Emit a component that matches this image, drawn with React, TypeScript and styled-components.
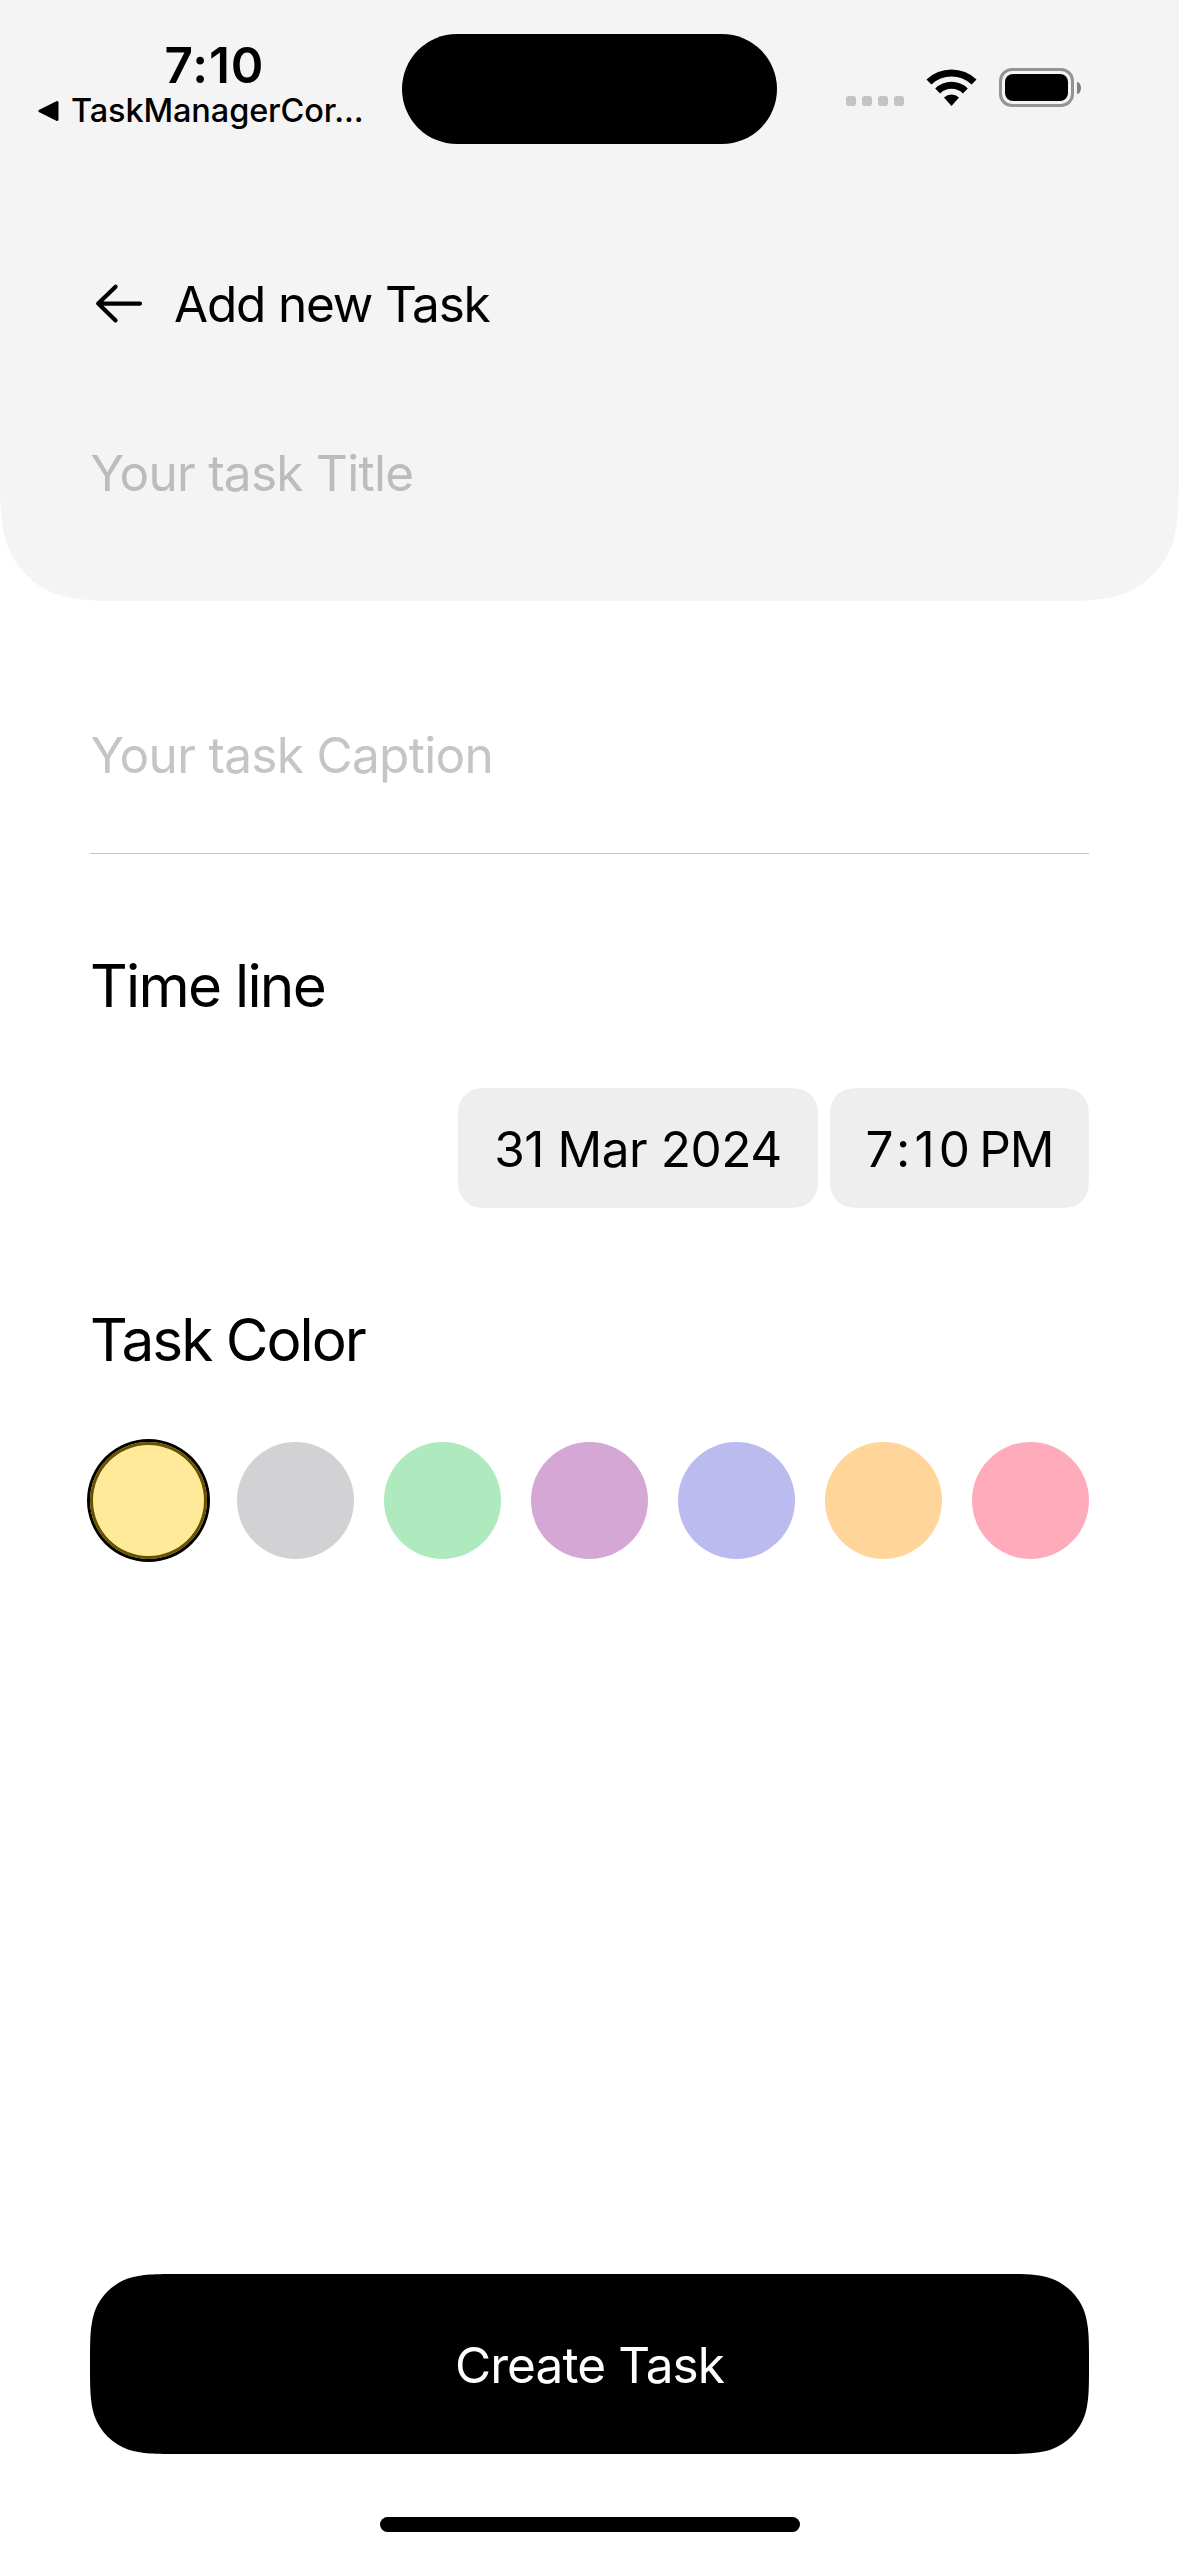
import React, { useState } from "react";
import styled, { createGlobalStyle } from "styled-components";

const GlobalStyle = createGlobalStyle`
  *, *::before, *::after { box-sizing: border-box; }
  html, body { margin: 0; padding: 0; background: #ffffff; }
  button { border: 0; padding: 0; margin: 0; font: inherit; color: inherit; }
`;

/* Outline of a rectangle with continuous (iOS style) corners. */
function continuousRect(w: number, h: number, r: number, topCorners = true): string {
  const reach = Math.min(1.52866 * r, w / 2, topCorners ? h / 2 : h);
  const near = Math.min(1.08849 * r, reach);
  const f = (n: number) => n.toFixed(2);
  const corner = (cx: number, cy: number, sx: number, sy: number, fromSide: boolean) => {
    const pts: [number, number][] = [
      [reach, 0], [near, 0], [0.86841 * r, 0], [0.63149 * r, 0.07491 * r],
      [0.37282 * r, 0.16906 * r], [0.16906 * r, 0.37282 * r], [0.07491 * r, 0.63149 * r],
      [0, 0.86841 * r], [0, near], [0, reach],
    ];
    const p = (fromSide ? [...pts].reverse() : pts).map(([x, y]) => `${f(cx + sx * x)} ${f(cy + sy * y)}`);
    return `L${p[0]} C${p[1]} ${p[2]} ${p[3]} C${p[4]} ${p[5]} ${p[6]} C${p[7]} ${p[8]} ${p[9]} `;
  };
  const top = topCorners
    ? `M${f(w / 2)} 0 ` + corner(w, 0, -1, 1, false)
    : `M0 0 L${w} 0 `;
  return (
    top +
    corner(w, h, -1, -1, true) +
    corner(0, h, 1, -1, false) +
    (topCorners ? corner(0, 0, 1, 1, true) : "") +
    "Z"
  );
}

const Screen = styled.div`
  width: 1179px;
  height: 2556px;
  display: flex;
  flex-direction: column;
  overflow: hidden;
  background: #ffffff;
  color: #000000;
  font-family: Inter, "Liberation Sans", sans-serif;
`;

const Header = styled.header`
  height: 601px;
  flex: none;
  display: flex;
  flex-direction: column;
  background: #f4f4f4;
  clip-path: path("${continuousRect(1179, 601, 90, false)}");
`;

const StatusBar = styled.div`
  height: 177px;
  flex: none;
  display: grid;
  grid-template-columns: 402px 375px 1fr;
  align-items: start;
`;

const StatusLeft = styled.div`
  display: flex;
  flex-direction: column;
  padding: 40px 0 0 38px;
`;

const Clock = styled.div`
  width: 353px;
  text-align: center;
  font-size: 49.5px;
  line-height: 50px;
  font-weight: 600;
  letter-spacing: 0.9px;
`;

const BackToApp = styled.div`
  display: flex;
  align-items: center;
  gap: 12px;
  height: 41px;
  font-size: 32.5px;
  line-height: 41px;
  font-weight: 500;
  letter-spacing: -0.12px;
  white-space: nowrap;
`;

const Island = styled.div`
  height: 110px;
  margin-top: 34px;
  border-radius: 55px;
  background: #000000;
`;

const StatusIcons = styled.div`
  display: flex;
  align-items: flex-end;
  padding: 68px 0 0 69px;
`;

const SignalDots = styled.div`
  display: flex;
  gap: 6px;
  margin: 0 22px 1px 0;
`;

const Dot = styled.span`
  width: 10px;
  height: 10px;
  border-radius: 3px;
  background: #c3c3c3;
`;

const WifiIcon = styled.svg`
  display: block;
  margin: 0 22px 1px 0;
`;

const Battery = styled.div`
  display: flex;
  align-items: center;
  gap: 3px;
`;

const BatteryShell = styled.div`
  width: 75px;
  height: 39px;
  padding: 3px;
  border: 3px solid #949494;
  border-radius: 13px;
`;

const BatteryLevel = styled.div`
  height: 100%;
  border-radius: 8px;
  background: #000000;
`;

const BatteryTip = styled.div`
  width: 4px;
  height: 12px;
  border-radius: 0 4px 4px 0 / 0 6px 6px 0;
  background: #808080;
`;

const TitleBar = styled.div`
  display: flex;
  align-items: center;
  height: 60px;
  margin-top: 97px;
  padding-left: 90px;
`;

const BackButton = styled.button`
  width: 84px;
  height: 60px;
  background: none;
  display: flex;
  align-items: center;
`;

const Heading = styled.h1`
  margin: 0;
  font-size: 49.5px;
  line-height: 60px;
  font-weight: 400;
  letter-spacing: -1.18px;
`;

const Field = styled.div<{ $top: number; $color: string; $spacing: number }>`
  margin-top: ${(p) => p.$top}px;
  padding-left: 90.5px;
  font-size: 49.5px;
  line-height: 60px;
  color: ${(p) => p.$color};
  letter-spacing: ${(p) => p.$spacing}px;
`;

const Form = styled.main`
  flex: 1;
  display: flex;
  flex-direction: column;
`;

const Divider = styled.hr`
  width: 999px;
  height: 1px;
  margin: 68px 90px 0;
  border: 0;
  background: #c6c6c8;
`;

const SectionTitle = styled.h2<{ $top: number; $spacing: number }>`
  margin: ${(p) => p.$top}px 0 0 90px;
  font-size: 58.5px;
  line-height: 72px;
  font-weight: 400;
  letter-spacing: ${(p) => p.$spacing}px;
`;

const PickerRow = styled.div`
  display: flex;
  justify-content: flex-end;
  gap: 12px;
  margin: 66px 90px 0;
`;

const Chip = styled.button<{ $width: number; $spacing: number }>`
  width: ${(p) => p.$width}px;
  height: 120px;
  padding-top: 2px;
  background: #eeeeef;
  clip-path: path("${(p) => continuousRect(p.$width, 120, 24)}");
  font-size: 49.5px;
  line-height: 60px;
  letter-spacing: ${(p) => p.$spacing}px;
  white-space: nowrap;
`;

const Meridiem = styled.span`
  margin-left: 5px;
  letter-spacing: -1px;
`;

const Swatches = styled.div`
  display: flex;
  justify-content: space-between;
  margin: 66px 90px 0;
`;

const Swatch = styled.button<{ $color: string; $selected: boolean }>`
  width: 117px;
  height: 117px;
  border-radius: 50%;
  background: ${(p) => p.$color};
  box-shadow: ${(p) => (p.$selected ? "0 0 0 3px #000000, inset 0 0 0 3px #665200" : "none")};
`;

const Footer = styled.footer`
  height: 282px;
  flex: none;
  display: flex;
  flex-direction: column;
  align-items: center;
`;

const CreateButton = styled.button`
  width: 999px;
  height: 180px;
  padding-top: 2px;
  background: #000000;
  color: #ffffff;
  clip-path: path("${continuousRect(999, 180, 60)}");
  font-size: 49.5px;
  line-height: 60px;
  letter-spacing: -0.9px;
`;

const HomeIndicator = styled.div`
  width: 420px;
  height: 15px;
  margin-top: 63px;
  border-radius: 8px;
  background: #000000;
`;

const COLORS = ["#ffea99", "#d2d2d4", "#aeeabe", "#d4a7d4", "#bbbbef", "#ffd599", "#ffabbb"];

export default function App() {
  const [selected, setSelected] = useState(0);
  return (
    <Screen>
      <GlobalStyle />
      <Header>
        <StatusBar>
          <StatusLeft>
            <Clock>7:10</Clock>
            <BackToApp>
              <svg width="21" height="22" viewBox="0 0 21 22">
                <path d="M2 11 L19 2.5 V19.5 Z" fill="#000" stroke="#000" strokeWidth="3" strokeLinejoin="round" />
              </svg>
              <span>TaskManagerCor...</span>
            </BackToApp>
          </StatusLeft>
          <Island />
          <StatusIcons>
            <SignalDots>
              <Dot />
              <Dot />
              <Dot />
              <Dot />
            </SignalDots>
            <WifiIcon width="51" height="37" viewBox="0 0 51 37">
              <path d="M0.5 10.6 A36 36 0 0 1 50.5 10.6 L45.6 15.6 A29 29 0 0 0 5.4 15.6 Z" />
              <path d="M9.2 19.4 A23.5 23.5 0 0 1 41.8 19.4 L36.9 24.4 A16.4 16.4 0 0 0 14.1 24.4 Z" />
              <path d="M18 28.4 A11.5 11.5 0 0 1 33 28.4 L25.5 37 Z" />
            </WifiIcon>
            <Battery>
              <BatteryShell>
                <BatteryLevel />
              </BatteryShell>
              <BatteryTip />
            </Battery>
          </StatusIcons>
        </StatusBar>
        <TitleBar>
          <BackButton aria-label="Back">
            <svg width="54" height="44" viewBox="0 0 54 44" fill="none" stroke="#000" strokeWidth="4.2" strokeLinecap="round" strokeLinejoin="round">
              <path d="M50 21.6 H8.4 M25.6 4.8 L8.2 21.6 L25.6 38.4" />
            </svg>
          </BackButton>
          <Heading>Add new Task</Heading>
        </TitleBar>
        <Field $top={109} $color="#bcbcbe" $spacing={-0.73}>Your task Title</Field>
      </Header>
      <Form>
        <Field $top={124} $color="#c5c5c7" $spacing={-0.68}>Your task Caption</Field>
        <Divider />
        <SectionTitle $top={96} $spacing={-1.75}>Time line</SectionTitle>
        <PickerRow>
          <Chip $width={360} $spacing={-0.45}>31 Mar 2024</Chip>
          <Chip $width={259} $spacing={4.2}>
            7:10<Meridiem>PM</Meridiem>
          </Chip>
        </PickerRow>
        <SectionTitle $top={96} $spacing={-2}>Task Color</SectionTitle>
        <Swatches>
          {COLORS.map((color, i) => (
            <Swatch key={color} $color={color} $selected={i === selected} onClick={() => setSelected(i)} />
          ))}
        </Swatches>
      </Form>
      <Footer>
        <CreateButton>Create Task</CreateButton>
        <HomeIndicator />
      </Footer>
    </Screen>
  );
}
